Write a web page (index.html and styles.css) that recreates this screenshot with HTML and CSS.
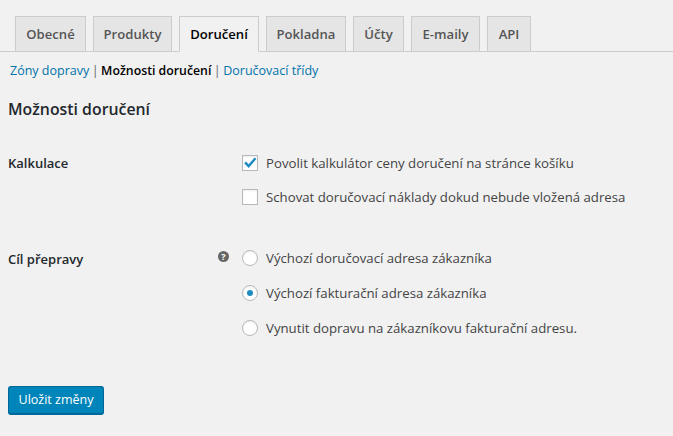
FILE: index.html
```html
<!DOCTYPE html>
<html lang="cs">
<head>
<meta charset="utf-8">
<title>Možnosti doručení</title>
<link rel="stylesheet" href="styles.css">
</head>
<body>
<nav class="tabs">
  <a class="tab w-obecne">Obecné</a>
  <a class="tab w-produkty">Produkty</a>
  <a class="tab active w-doruceni">Doručení</a>
  <a class="tab w-pokladna">Pokladna</a>
  <a class="tab w-ucty">Účty</a>
  <a class="tab w-emaily">E-maily</a>
  <a class="tab w-api">API</a>
</nav>
<ul class="subnav">
  <li><a class="link">Zóny dopravy</a><span class="sep">|</span></li>
  <li><strong class="current">Možnosti doručení</strong><span class="sep alt">|</span></li>
  <li><a class="link">Doručovací třídy</a></li>
</ul>
<h2 class="title">Možnosti doručení</h2>
<section class="row row-calc">
  <div class="label">Kalkulace</div>
  <div class="tip-col"></div>
  <div class="fields">
    <label class="field"><span class="box checked"><svg viewBox="0 0 16 16" width="16" height="16"><path d="M2.2 8.3 L4 6.6 L6.6 9.2 L12.6 2.4 L14.4 4 L6.7 13 Z" fill="#1e8cbe"/></svg></span>Povolit kalkulátor ceny doručení na stránce košíku</label>
    <label class="field"><span class="box"></span>Schovat doručovací náklady dokud nebude vložená adresa</label>
  </div>
</section>
<section class="row row-dest">
  <div class="label label-dest">Cíl přepravy</div>
  <div class="tip-col"><span class="tip">?</span></div>
  <div class="fields fields-radio">
    <label class="field"><span class="radio"></span>Výchozí doručovací adresa zákazníka</label>
    <label class="field"><span class="radio on"></span>Výchozí fakturační adresa zákazníka</label>
    <label class="field"><span class="radio"></span>Vynutit dopravu na zákazníkovu fakturační adresu.</label>
  </div>
</section>
<button class="save" type="button">Uložit změny</button>
</body>
</html>
```
FILE: styles.css
```css
html, body { margin: 0; padding: 0; }
body {
  width: 673px;
  height: 436px;
  overflow: hidden;
  background: #f1f1f1;
  color: #444;
  font-family: "Open Sans", "Noto Sans", sans-serif;
  font-size: 13px;
}
.tabs {
  display: flex;
  gap: 7px;
  height: 35px;
  margin-top: 16px;
  padding-left: 15px;
  border-bottom: 1px solid #ccc;
  box-sizing: content-box;
}
.tab {
  box-sizing: border-box;
  height: 36px;
  border: 1px solid #ccc;
  border-bottom: 1px solid #ccc;
  background: #e5e5e5;
  color: #555;
  font-weight: 600;
  font-size: 13.1px;
  line-height: 35px;
  text-align: center;
  white-space: nowrap;
}
.tab.active {
  background: #f1f1f1;
  border-bottom-color: #f1f1f1;
  color: #000;
}
.w-obecne { width: 71px; }
.w-produkty { width: 79px; }
.w-doruceni { width: 80px; }
.w-pokladna { width: 80px; }
.w-ucty { width: 51px; }
.w-emaily { width: 69px; }
.w-api { width: 44px; }
.subnav {
  display: flex;
  list-style: none;
  margin: 10px 0 0;
  padding: 0 0 0 10px;
  line-height: 18px;
  height: 18px;
  font-size: 12.5px;
}
.link { color: #0073aa; }
.current { color: #000; font-weight: 600; font-size: 12.3px; }
.sep { color: #666; margin: 0 2.5px; font-weight: 400; font-size: 12.5px; }
.title {
  margin: 17px 0 0 8px;
  font-size: 15.85px;
  line-height: 24px;
  font-weight: 600;
  color: #23282d;
}
.row { display: flex; }
.row-calc { margin-top: 33px; }
.row-dest { margin-top: 43px; }
.label {
  width: 210px;
  padding-left: 8px;
  box-sizing: border-box;
  font-weight: 600;
  color: #23282d;
  line-height: 18px;
}
.label-dest { padding-top: 1px; }
.tip-col {
  width: 32px;
  flex: none;
  display: flex;
  justify-content: flex-end;
  padding-right: 13px;
  box-sizing: border-box;
}
.tip {
  width: 11px;
  height: 11px;
  margin-top: 2px;
  border-radius: 50%;
  background: #666;
  color: #fff;
  font-size: 9px;
  font-weight: 700;
  line-height: 11px;
  text-align: center;
}
.fields { display: flex; flex-direction: column; gap: 16px; }
.fields-radio { gap: 17px; }
.field {
  display: flex;
  align-items: center;
  gap: 8px;
  height: 18px;
  white-space: nowrap;
  font-size: 13.22px;
}
.box, .radio {
  box-sizing: border-box;
  width: 16px;
  height: 16px;
  flex: none;
  background: #fff;
  border: 1px solid #b4b9be;
  box-shadow: inset 0 1px 2px rgba(0, 0, 0, 0.07);
  display: flex;
  align-items: center;
  justify-content: center;
}
.box svg { flex: none; margin: -1px; }
.radio { border-radius: 50%; }
.radio.on::before {
  content: "";
  width: 6px;
  height: 6px;
  border-radius: 50%;
  background: #1e8cbe;
}
.save {
  display: block;
  margin: 49px 0 0 8px;
  width: 96px;
  height: 29px;
  padding: 0 0 1px;
  border: 1px solid #006799;
  border-bottom-width: 2px;
  border-radius: 3px;
  background: #0085ba;
  color: #fff;
  font-family: inherit;
  font-size: 12.5px;
  font-weight: 400;
}
```
